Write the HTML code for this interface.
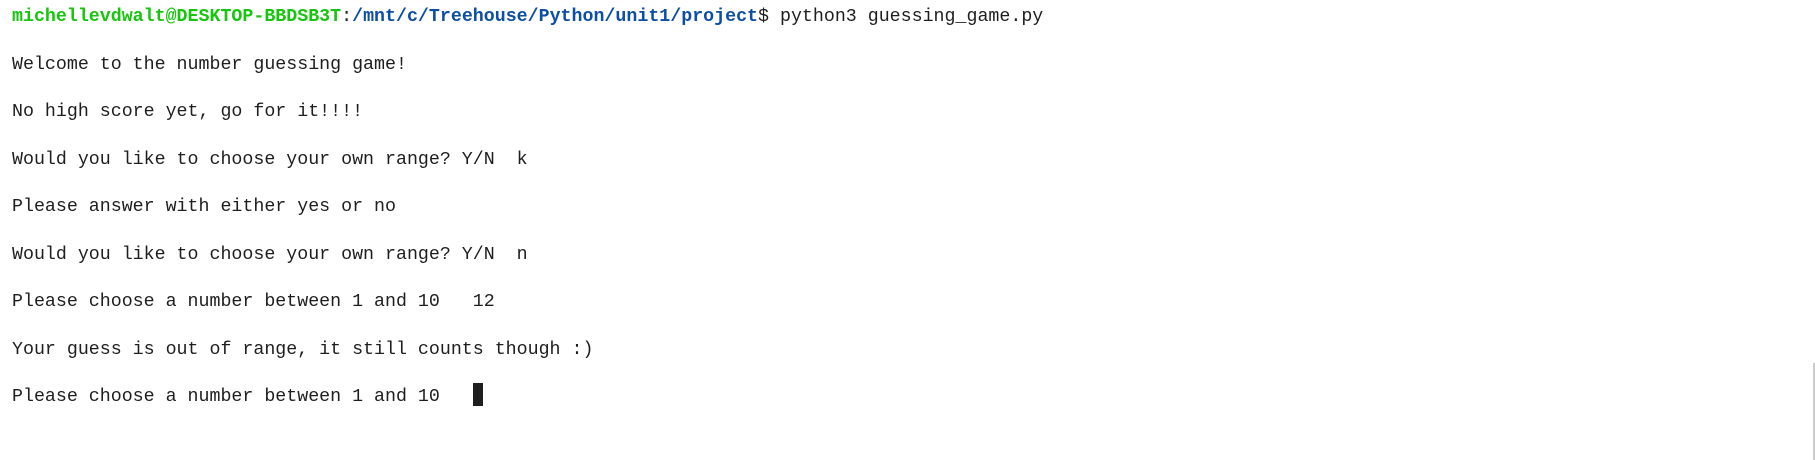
<!DOCTYPE html>
<html><head><meta charset="utf-8"><style>
html,body{margin:0;padding:0;background:#fff;width:1815px;height:460px;overflow:hidden;}
pre{position:absolute;left:12px;top:-6px;margin:0;font-family:"Liberation Mono",monospace;font-size:18.3px;line-height:47.5px;color:#1e1e1e;}
.g{color:#16c60c;font-weight:bold}
.b{color:#0d4ea6;font-weight:bold}
.cur{display:inline-block;width:10px;height:23px;background:#1e1e1e;vertical-align:-5px;}
.sb{position:absolute;left:1813px;top:363px;width:2px;height:97px;background:#ccc;}
</style></head><body>
<pre><span class="g">michellevdwalt@DESKTOP-BBDSB3T</span>:<span class="b">/mnt/c/Treehouse/Python/unit1/project</span>$ python3 guessing_game.py
Welcome to the number guessing game!
No high score yet, go for it!!!!
Would you like to choose your own range? Y/N  k
Please answer with either yes or no
Would you like to choose your own range? Y/N  n
Please choose a number between 1 and 10   12
Your guess is out of range, it still counts though :)
Please choose a number between 1 and 10   <span class="cur"></span></pre>
<div class="sb"></div>
</body></html>
